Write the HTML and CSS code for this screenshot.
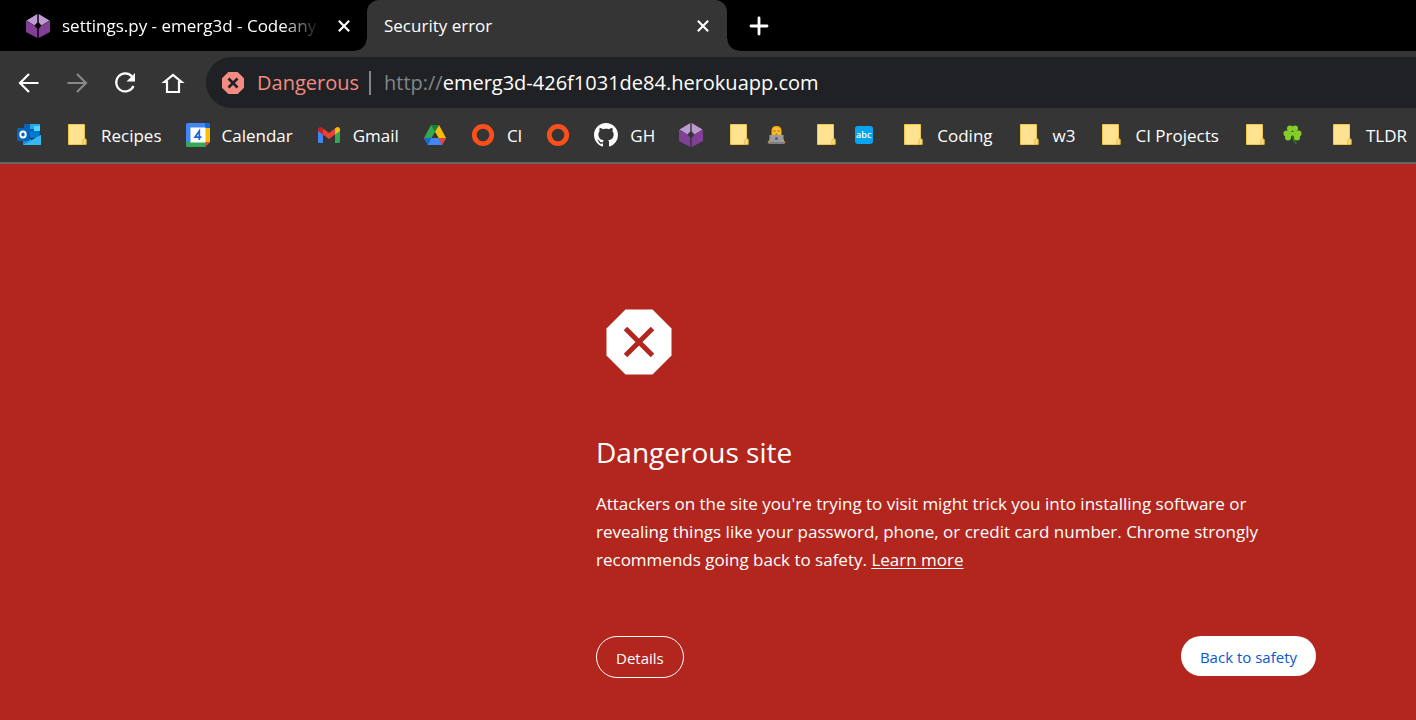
FILE: index.html
```html
<!DOCTYPE html>
<html lang="en">
<head>
<meta charset="utf-8">
<title>Security error</title>
<link rel="stylesheet" href="styles.css">
</head>
<body>
<svg class="sprite" aria-hidden="true">
  <symbol id="cube" viewBox="0 0 24 24">
    <path fill="#bd9bd0" d="M11.300 0v8.500L8.500 11.500 0.500 6.500z M12.700 0v8.500l2.800 3 8-5z"/>
    <path fill="#823f98" d="M0 6.500l9 5.500 2.300 3v9L0 18zM24 6.500l-9 5.500-2.300 3v9L24 18z"/>
  </symbol>
  <symbol id="folder" viewBox="0 0 24 24">
    <path fill="#ffe391" stroke="#efc64b" d="M3.500 1.500h16V16h1.500v5.500H3.500z"/>
    <path fill="#ffe391" stroke="#e0b52d" d="M18 21.500v-4q0-1.500 1.500-1.500t1.500 1.500v4z"/>
  </symbol>
  <symbol id="ring" viewBox="0 0 24 24"><circle cx="12" cy="12" r="8.700" fill="none" stroke="#fb4f1c" stroke-width="4.800"/></symbol>
  <symbol id="close" viewBox="0 0 14 14"><path d="M2.500 2.500l9 9M11.500 2.500l-9 9" fill="none" stroke="currentColor" stroke-width="1.900"/></symbol>
</svg>

<header class="browser">
  <div class="tabs">
    <div class="tab">
      <svg class="icon"><use href="#cube"/></svg>
      <span class="tab-title fade">settings.py - emerg3d - Codeany</span>
      <button class="tab-close" aria-label="Close tab"><svg><use href="#close"/></svg></button>
    </div>
    <div class="tab active">
      <span class="tab-title">Security error</span>
      <button class="tab-close" aria-label="Close tab"><svg><use href="#close"/></svg></button>
    </div>
    <button class="new-tab" aria-label="New tab"><svg viewBox="0 0 20 20"><path d="M10 2v16M2 10h16" stroke="#fff" stroke-width="2.800" stroke-linecap="round"/></svg></button>
  </div>

  <div class="toolbar">
    <nav class="nav" aria-label="Navigation">
      <button aria-label="Back"><svg class="icon" viewBox="0 0 24 24"><path d="M21.500 12H4M12 3l-9 9 9 9"/></svg></button>
      <button aria-label="Forward" disabled><svg class="icon" viewBox="0 0 24 24"><path d="M2.500 12H20M12 3l9 9-9 9"/></svg></button>
      <button aria-label="Reload"><svg class="icon" viewBox="0 0 24 24"><path d="M19 5.500A9 9 0 1 0 20.500 15"/><path class="solid" d="M22 2v8.500h-8.500z"/></svg></button>
      <button aria-label="Home"><svg class="icon" viewBox="0 0 24 24"><path d="M6 11v10h12V11h2.500L12 4l-8.500 7z"/></svg></button>
    </nav>
    <div class="omnibox">
      <svg class="icon" viewBox="0 0 24 24"><path fill="#f28b82" d="M7.300 1h9.400L23 7.300v9.400L16.700 23H7.300L1 16.700V7.300z"/><path d="M7.500 7.500l9 9M16.500 7.500l-9 9" stroke="#202124" stroke-width="2.600"/></svg>
      <span class="danger">Dangerous</span>
      <span class="url"><span class="scheme">http://</span>emerg3d-426f1031de84.herokuapp.com</span>
    </div>
  </div>

  <nav class="bookmarks" aria-label="Bookmarks">
    <a href="#" aria-label="Outlook"><svg class="icon" viewBox="0 0 24 24"><path fill="#0f5fb0" d="M7 1h16v12H7z"/><path fill="#28a8ea" d="M13 1h10v5H13z"/><path fill="#50d9ff" d="M17 3h6v5h-6z"/><path fill="#0078d4" d="M13 8h9v7h-9z"/><path fill="#1490df" d="M6 22V12l9 5 9-5v10z"/><path fill="#35b8f1" d="M6 22l18-10v10z"/><rect y="5" width="12" height="13" rx="1" fill="#0364b8"/><ellipse cx="6" cy="11.500" rx="2.700" ry="3" fill="none" stroke="#fff" stroke-width="2"/></svg></a>
    <a href="#"><svg class="icon"><use href="#folder"/></svg>Recipes</a>
    <a href="#"><svg class="icon" viewBox="0 0 24 24"><rect width="24" height="24" rx="2" fill="#4285f4"/><path fill="#fbbc04" d="M19 5h5v14h-5z"/><path fill="#34a853" d="M0 19h19v5H2q-2 0-2-2z"/><path fill="#1967d2" d="M19 0h3q2 0 2 2v3h-5z"/><path fill="#353535" d="M19 24l5-5v5z"/><path fill="#ea4335" d="M19 19h5l-5 5z"/><path fill="#fff" d="M4.500 4.500h15v15h-15z"/><path fill="none" stroke="#1a67d2" stroke-width="1.700" d="M13.300 17V8L9 14.200h6.500"/></svg>Calendar</a>
    <a href="#"><svg class="icon" viewBox="0 0 24 24"><path fill="#4285f4" d="M1 6l5 4v10H2.500Q1 20 1 18.500z"/><path fill="#34a853" d="M18 10l5-4v12.500q0 1.500-1.500 1.500H18z"/><path fill="#ea4335" d="M6 5.500l6 4.500 6-4.500v6L12 16l-6-4.500z"/><path fill="#c5221f" d="M1 6.500Q1 4 3.500 4 4.500 4 6 5.500v6L1 8z"/><path fill="#fbbc04" d="M23 6.500Q23 4 20.500 4 19.500 4 18 5.500v6L23 8z"/></svg>Gmail</a>
    <a href="#" aria-label="Drive"><svg class="icon" viewBox="0 0 24 24"><path fill="#34a853" d="M8 2h4l2.500 4L5 22 1 15z"/><path fill="#188038" d="M8 2h8l-4 7z"/><path fill="#fbbc04" d="M16 2l7 13h-7.500L12 9z"/><path fill="#4285f4" d="M1 15h22l-4 7H5z"/><path fill="#1967d2" d="M1 15h7.500L5 22z"/><path fill="#ea4335" d="M15.500 15H23l-4 7z"/><path fill="#353535" d="M12 9l3.500 6h-7z"/></svg></a>
    <a href="#"><svg class="icon"><use href="#ring"/></svg>CI</a>
    <a href="#" aria-label="Code Institute"><svg class="icon"><use href="#ring"/></svg></a>
    <a href="#"><svg class="icon" viewBox="0 0 16 16"><path fill="#fff" d="M8 0C3.580 0 0 3.580 0 8c0 3.540 2.290 6.530 5.470 7.590.4.070.55-.17.55-.38 0-.19-.01-.82-.01-1.490-2.010.37-2.530-.49-2.690-.94-.09-.23-.48-.94-.82-1.130-.28-.15-.68-.52-.01-.53.63-.01 1.080.58 1.230.82.72 1.210 1.870.87 2.330.66.070-.52.28-.87.51-1.070-1.780-.2-3.640-.89-3.640-3.950 0-.87.31-1.590.82-2.150-.08-.2-.36-1.020.08-2.120 0 0 .67-.21 2.200.82.64-.18 1.320-.27 2-.27s1.360.09 2 .27c1.530-1.040 2.200-.82 2.200-.82.44 1.100.16 1.920.08 2.120.51.56.82 1.270.82 2.150 0 3.070-1.870 3.750-3.650 3.950.29.25.54.73.54 1.480 0 1.070-.01 1.930-.01 2.200 0 .21.15.46.55.38A8 8 0 0 0 16 8c0-4.420-3.580-8-8-8z"/></svg>GH</a>
    <a href="#" aria-label="Codeanywhere"><svg class="icon"><use href="#cube"/></svg></a>
    <a href="#" aria-label="Tech folder"><svg class="icon"><use href="#folder"/></svg><svg class="icon emoji" viewBox="0 0 24 24"><path fill="#fcae18" d="M7 13V8q0-5 5-5t5 5v5z"/><circle cx="12" cy="8.500" r="3.700" fill="#f9c52d"/><path d="M9 8h2M13 8h2M11 11h2" stroke="#80512b"/><path fill="#fcae18" d="M3 20l3-5h12l3 5z"/><path fill="#9b9b9f" d="M5 12h14v8H5z"/><path fill="#7f7f84" d="M4 19h16v2H4z"/><circle cx="12" cy="15.500" r="1.500" fill="#65546e"/></svg></a>
    <a href="#" aria-label="Abc folder"><svg class="icon"><use href="#folder"/></svg><span class="emoji"><span class="abc">abc</span></span></a>
    <a href="#"><svg class="icon"><use href="#folder"/></svg>Coding</a>
    <a href="#"><svg class="icon"><use href="#folder"/></svg>w3</a>
    <a href="#"><svg class="icon"><use href="#folder"/></svg>CI Projects</a>
    <a href="#" aria-label="Shamrock folder"><svg class="icon"><use href="#folder"/></svg><svg class="icon emoji" viewBox="0 0 24 24"><path d="M12 11q0 6 4 10" fill="none" stroke="#3e721d" stroke-width="1.600"/><g fill="#83cf27"><circle cx="9.500" cy="5.500" r="3"/><circle cx="14.500" cy="5.500" r="3"/><circle cx="6" cy="10.500" r="3"/><circle cx="7.500" cy="14.500" r="3"/><circle cx="18" cy="10.500" r="3"/><circle cx="16.500" cy="14.500" r="3"/><path d="M7 6l5 3 5-3-2 5 4 2-3 3-4-4-4 4-3-3 4-2z"/></g></svg></a>
    <a href="#"><svg class="icon"><use href="#folder"/></svg>TLDR</a>
  </nav>
</header>

<main class="page">
  <div class="warning">
    <svg class="stop" viewBox="0 0 66 66"><path fill="#fff" d="M19.500 0.500h27L65.500 19.500v27L46.500 65.500h-27L0.500 46.500v-27z"/><path d="M19.500 19.500l27 27M46.500 19.500l-27 27" stroke="#b3261e" stroke-width="5"/></svg>
    <h1>Dangerous site</h1>
    <p>Attackers on the site you're trying to visit might trick you into installing software or revealing things like your password, phone, or credit card number. Chrome strongly recommends going back to safety. <a href="#">Learn more</a></p>
    <div class="actions">
      <button class="details">Details</button>
      <button class="safety">Back to safety</button>
    </div>
  </div>
</main>
</body>
</html>
```
FILE: styles.css
```css
* { box-sizing: border-box; }
body {
  margin: 0;
  min-height: 100vh;
  display: flex;
  flex-direction: column;
  overflow-x: hidden;
  background: #b3261e;
  color: #fff;
  font-family: "Open Sans", "Noto Sans", sans-serif;
  font-size: 17px;
}
button { border: 0; padding: 0; background: none; color: inherit; font: inherit; }
svg { display: block; flex: none; }
.sprite { position: absolute; width: 0; height: 0; }
.icon { width: 24px; height: 24px; }

.tabs { display: flex; height: 51px; background: #000; }
.tab { display: flex; align-items: center; width: 367px; padding: 0 15px 0 26px; }
.tab-title { flex: 1; overflow: hidden; white-space: nowrap; }
.tab .icon + .tab-title { margin-left: 12px; }
.fade { mask-image: linear-gradient(to right, #000 85%, transparent); }
.tab-close { margin-left: 16px; }
.tab-close svg { width: 16px; height: 16px; }
.active {
  position: relative;
  width: 360px;
  padding: 0 16px 0 17px;
  border-radius: 12px 12px 0 0;
  background: #353535;
}
.active::before, .active::after {
  content: "";
  position: absolute;
  bottom: 0;
  width: 12px;
  height: 12px;
}
.active::before { right: 100%; background: radial-gradient(circle at 0 0, #000 11px, #353535 12px); }
.active::after { left: 100%; background: radial-gradient(circle at 100% 0, #000 11px, #353535 12px); }
.new-tab { margin-left: 22px; }
.new-tab svg { width: 20px; height: 20px; }

.toolbar { display: flex; align-items: center; height: 57px; padding-top: 6px; background: #353535; }
.nav { display: flex; flex: none; gap: 24px; padding: 0 21px 0 17px; }
.nav path { fill: none; stroke: #fff; stroke-width: 2.200; }
.nav .solid { fill: #fff; stroke: none; }
.nav :disabled path { stroke: #888; }
.omnibox {
  flex: 1;
  display: flex;
  align-items: center;
  height: 51px;
  padding-left: 15px;
  border-radius: 26px 0 0 26px;
  background: #202124;
  font-size: 20px;
  white-space: nowrap;
}
.danger { margin-left: 12px; padding-right: 10px; border-right: 2px solid #80868b; color: #f28b82; line-height: 24px; }
.url { margin-left: 13px; }
.scheme { color: #80868b; }

.browser { border-bottom: 2px solid #666; }
.bookmarks {
  display: flex;
  align-items: center;
  gap: 24px;
  height: 54px;
  padding-left: 17px;
  background: #353535;
  overflow: hidden;
}
.bookmarks a { display: flex; flex: none; align-items: center; gap: 12px; color: inherit; text-decoration: none; white-space: nowrap; }
.bookmarks .emoji { width: 27px; }
.abc {
  display: block;
  width: 18px;
  border-radius: 3px;
  margin: auto;
  background: #06a5f0;
  font-size: 9px;
  font-weight: 600;
  line-height: 18px;
  text-align: center;
}

.page { flex: 1; padding: 145px 100px 40px; }
.warning { max-width: 720px; margin-left: auto; }
.stop { width: 66px; height: 66px; margin-left: 10px; }
h1 { margin: 59px 0 20px; font-size: 28px; font-weight: 400; line-height: 36px; }
p { margin: 0; max-width: 680px; line-height: 28px; }
p a { color: inherit; text-underline-offset: 2px; }
.actions { display: flex; justify-content: space-between; align-items: flex-start; margin-top: 62px; font-size: 15px; }
.actions button { height: 40px; border-radius: 21px; padding: 1px 19px 0; }
.actions .details { height: 42px; border: 1px solid #fff; }
.actions .safety { background: #fff; color: #0b57d0; }
```
